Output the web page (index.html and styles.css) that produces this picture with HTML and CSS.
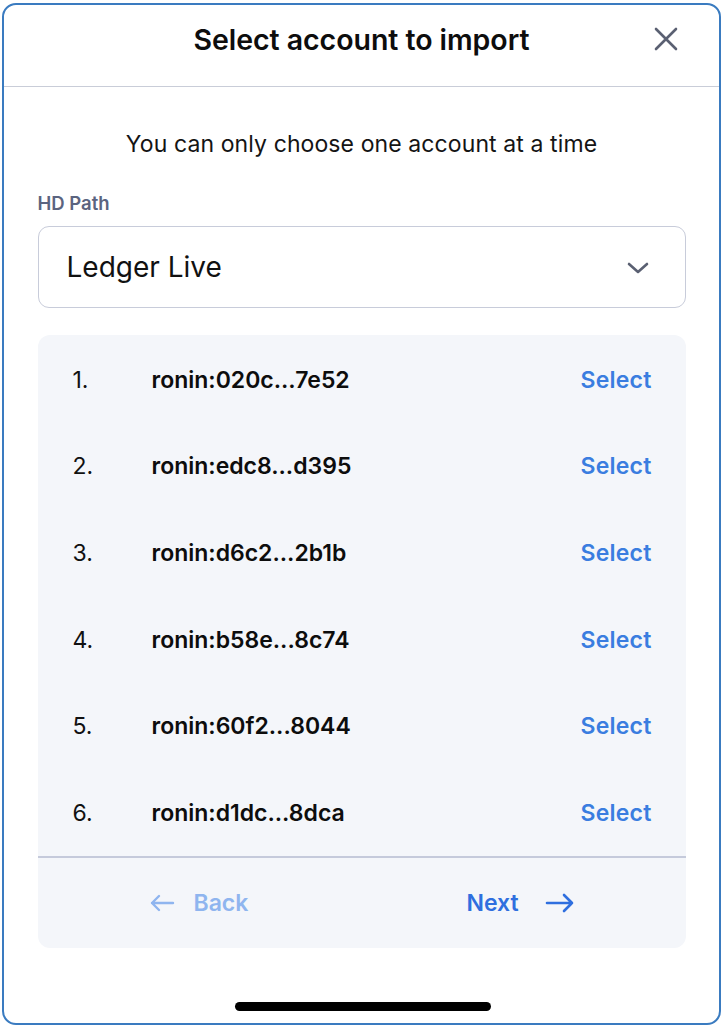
FILE: index.html
```html
<!DOCTYPE html>
<html lang="en">
<head>
<meta charset="utf-8">
<title>Select account to import</title>
<link rel="stylesheet" href="styles.css">
</head>
<body>
<div class="frame">
  <header class="header">
    <h1 class="title">Select account to import</h1>
    <button class="close" aria-label="Close">
      <svg width="24" height="24" viewBox="0 0 24 24"><path d="M2 2 L22 22 M22 2 L2 22" stroke="#5a6072" stroke-width="2.6" stroke-linecap="round" fill="none"/></svg>
    </button>
  </header>
  <main class="content">
    <p class="subtitle">You can only choose one account at a time</p>
    <label class="label">HD Path</label>
    <div class="select">
      <span class="select-value">Ledger Live</span>
      <svg class="chevron" width="22" height="12" viewBox="0 0 22 12"><path d="M2 2 L11 10 L20 2" stroke="#5a6072" stroke-width="2.6" stroke-linecap="round" stroke-linejoin="round" fill="none"/></svg>
    </div>
    <section class="card">
      <ul class="list">
        <li class="row"><span class="num">1.</span><span class="addr">ronin:020c...7e52</span><span class="pick">Select</span></li>
        <li class="row"><span class="num">2.</span><span class="addr">ronin:edc8...d395</span><span class="pick">Select</span></li>
        <li class="row"><span class="num">3.</span><span class="addr">ronin:d6c2...2b1b</span><span class="pick">Select</span></li>
        <li class="row"><span class="num">4.</span><span class="addr">ronin:b58e...8c74</span><span class="pick">Select</span></li>
        <li class="row"><span class="num">5.</span><span class="addr">ronin:60f2...8044</span><span class="pick">Select</span></li>
        <li class="row"><span class="num">6.</span><span class="addr">ronin:d1dc...8dca</span><span class="pick">Select</span></li>
      </ul>
      <div class="pager">
        <div class="nav nav-back">
          <svg width="26" height="18" viewBox="0 0 26 18"><path d="M24 9 H3 M10 2 L3 9 L10 16" stroke="currentColor" stroke-width="2.4" stroke-linecap="round" stroke-linejoin="round" fill="none"/></svg>
          <span>Back</span>
        </div>
        <div class="nav nav-next">
          <span>Next</span>
          <svg width="30" height="20" viewBox="0 0 30 20"><path d="M2 10 H27 M19 2 L27 10 L19 18" stroke="currentColor" stroke-width="2.6" stroke-linecap="round" stroke-linejoin="round" fill="none"/></svg>
        </div>
      </div>
    </section>
  </main>
  <div class="home-bar"></div>
</div>
</body>
</html>
```

FILE: styles.css
```css
* { box-sizing: border-box; }
html, body { margin: 0; padding: 0; background: #ffffff; }
body {
  width: 726px;
  height: 1028px;
  font-family: Inter, "Noto Sans", sans-serif;
  color: #111111;
  overflow: hidden;
}
.frame {
  width: 719px;
  height: 1022px;
  margin: 3px 0 0 2px;
  border: 2.5px solid #3a7bc0;
  border-radius: 14px;
  display: flex;
  flex-direction: column;
  position: relative;
  background: #fff;
}
.header {
  height: 81.5px;
  border-bottom: 1.5px solid #c9cdd8;
  display: flex;
  align-items: center;
  justify-content: center;
  position: relative;
  padding-bottom: 12px;
}
.title {
  margin: 0;
  font-size: 28.5px;
  font-weight: 600;
  letter-spacing: -0.05px;
  color: #0d0d0d;
}
.close {
  position: absolute;
  right: 41px;
  top: 21.5px;
  width: 24px;
  height: 24px;
  padding: 0;
  border: none;
  background: none;
  display: flex;
}
.content {
  padding: 0 33.5px;
  display: flex;
  flex-direction: column;
}
.subtitle {
  margin: 42px 0 0;
  text-align: center;
  font-size: 23px;
  letter-spacing: 0.1px;
  line-height: 30px;
  color: #141414;
}
.label {
  margin-top: 34px;
  font-size: 18.5px;
  font-weight: 600;
  color: #5b6480;
  line-height: 20px;
}
.select {
  margin-top: 13px;
  height: 82px;
  border: 1.5px solid #c8ccda;
  border-radius: 11px;
  display: flex;
  align-items: center;
  justify-content: space-between;
  padding: 0 36px 0 28px;
}
.select-value {
  font-size: 28px;
  color: #111;
}
.chevron { margin-top: 2px; }
.card {
  margin-top: 27px;
  background: #f4f6fa;
  border-radius: 12px;
  display: flex;
  flex-direction: column;
}
.list {
  list-style: none;
  margin: 0;
  padding: 2px 0 0;
}
.row {
  height: 86.6px;
  display: flex;
  align-items: center;
  padding: 0 34px 0 35px;
  font-size: 23px;
}
.num {
  width: 79px;
  color: #111;
}
.addr {
  flex: 1;
  font-weight: 600;
  color: #0d0d0d;
}
.pick {
  font-weight: 600;
  color: #3a7de0;
  letter-spacing: 0.2px;
}
.pager {
  border-top: 2px solid #c5cadb;
  height: 92px;
  display: grid;
  grid-template-columns: 1fr 1fr;
  align-items: center;
}
.nav {
  display: flex;
  align-items: center;
  font-size: 23px;
  font-weight: 600;
}
.nav-back {
  color: #8fb5ef;
  justify-self: start;
  margin-left: 111px;
  gap: 19px;
}
.nav-next {
  color: #2f6fdf;
  justify-self: start;
  margin-left: 105px;
  gap: 26px;
}
.home-bar {
  position: absolute;
  left: 231px;
  bottom: 12px;
  width: 256px;
  height: 9px;
  border-radius: 5px;
  background: #000;
}
```
